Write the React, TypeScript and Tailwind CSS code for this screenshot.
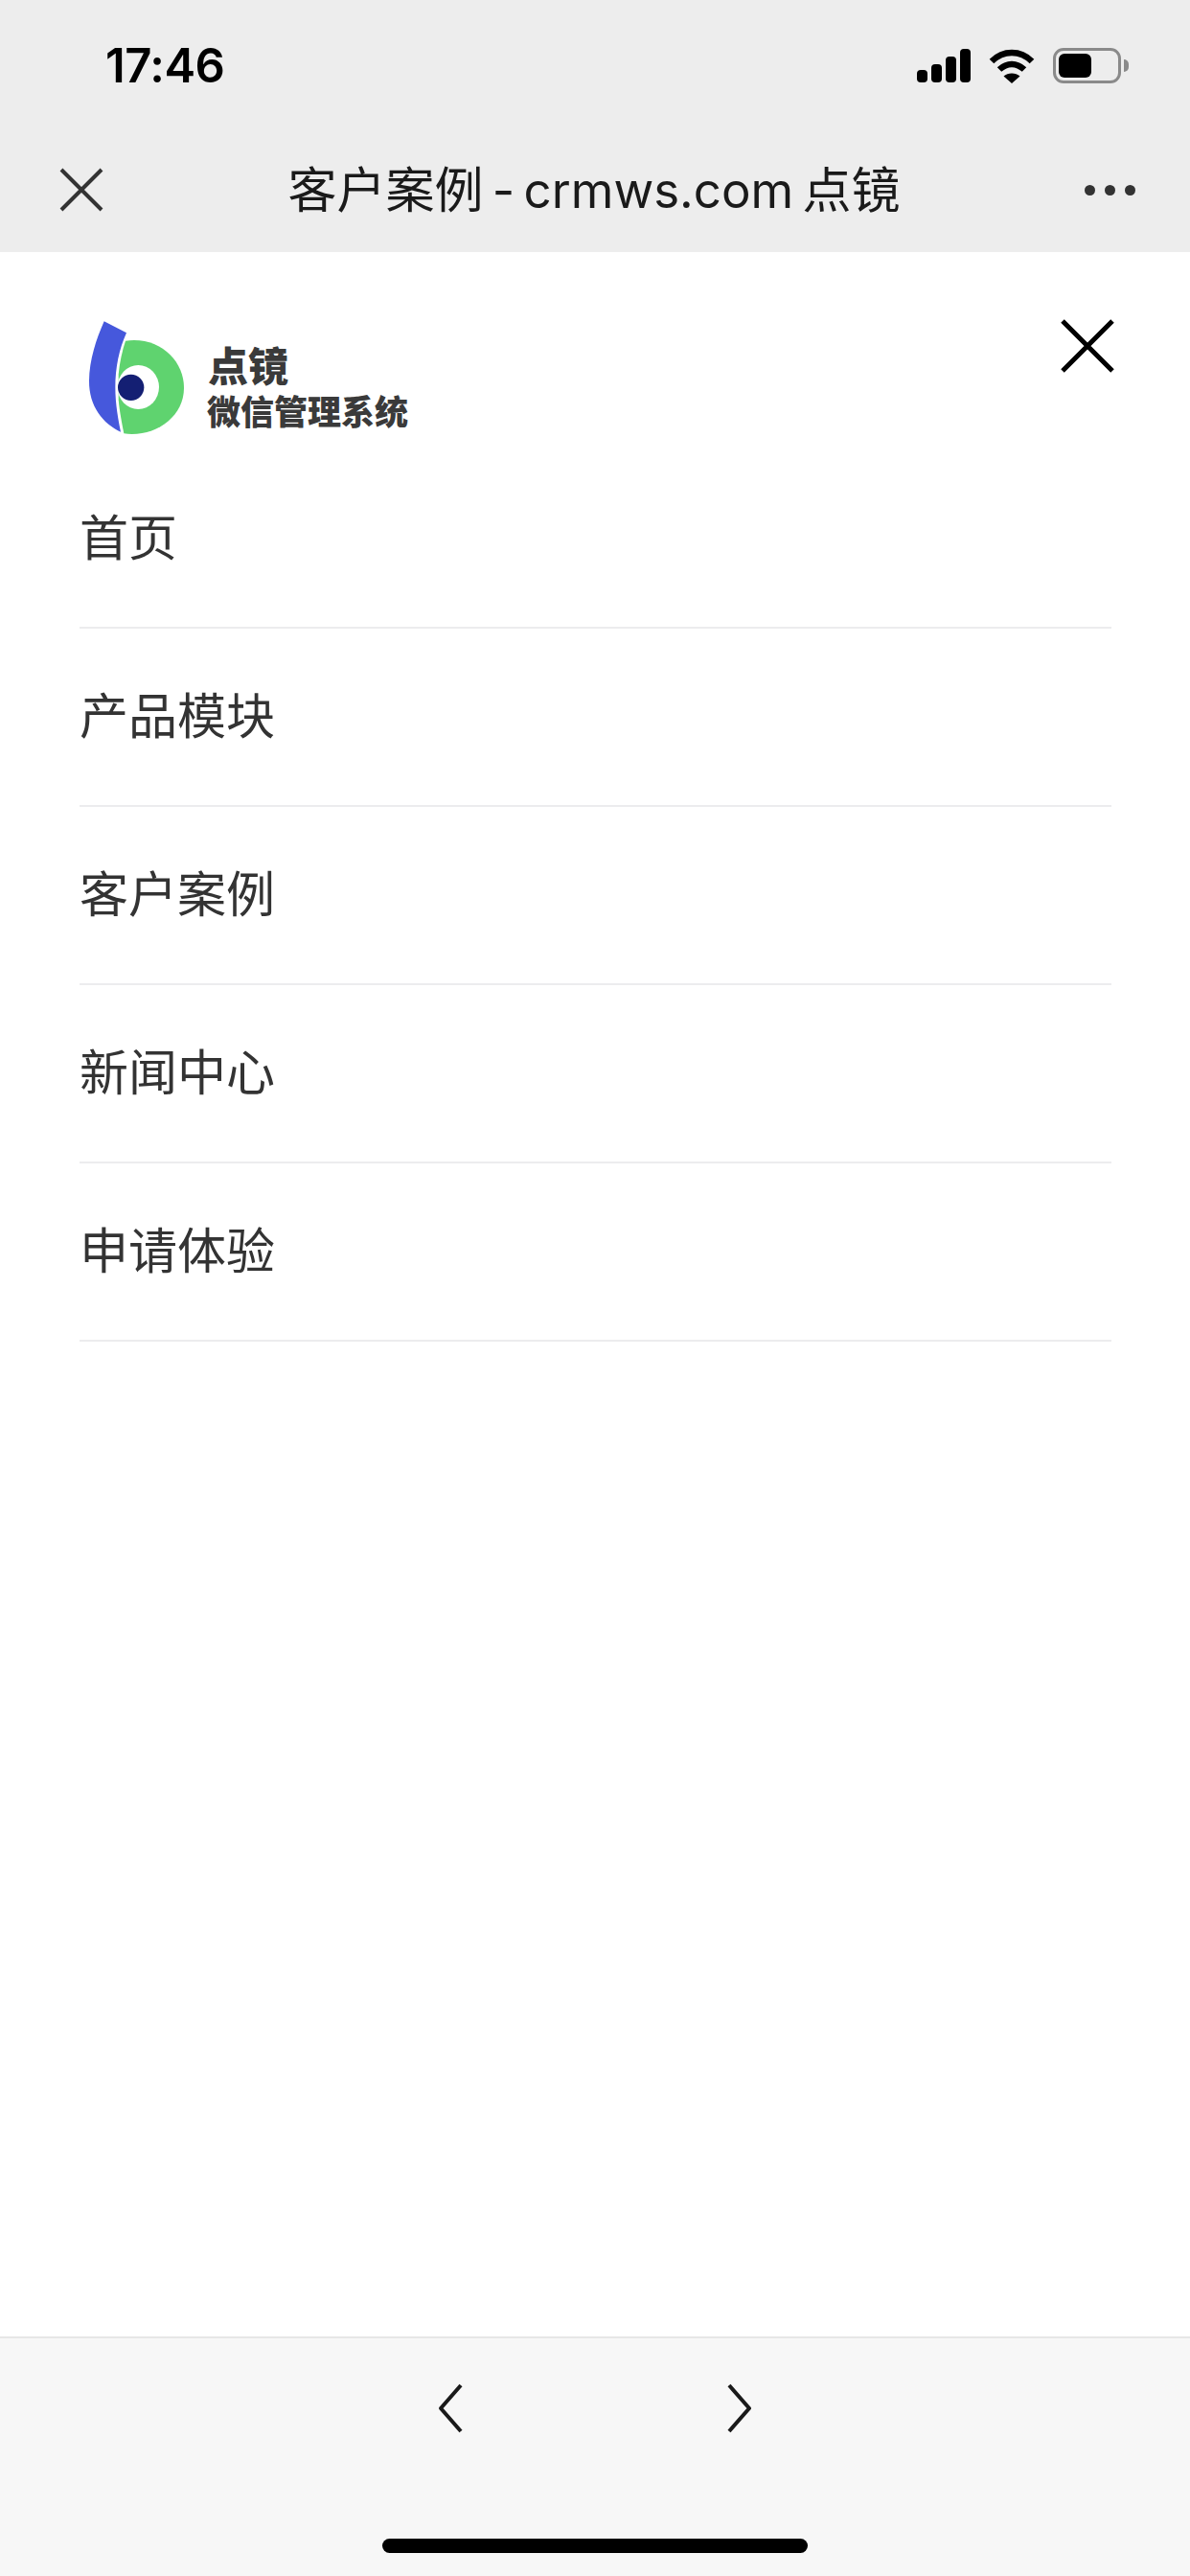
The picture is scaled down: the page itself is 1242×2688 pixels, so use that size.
import React from "react";

const sans = "font-['Inter','Noto_Sans_CJK_SC',sans-serif]";
const menuItems = ["首页", "产品模块", "客户案例", "新闻中心", "申请体验"];

const StatusIcons = () => (
  <div className="flex items-center">
    <svg width="58" height="37" viewBox="0 0 58 37" className="block" fill="#000">
      <rect x="1" y="23" width="11" height="13" rx="4" />
      <rect x="16" y="17" width="11" height="19" rx="4" />
      <rect x="31" y="9" width="11" height="27" rx="4" />
      <rect x="46" y="1" width="11" height="35" rx="4" />
    </svg>
    <svg width="48" height="38" viewBox="0 0 48 38" className="block ml-[18px]" fill="none" stroke="#000" strokeWidth="6.5">
      <path d="M3 14 C15 2 33 2 45 14" />
      <path d="M11 22.5 C19 15 29 15 37 22.5" />
      <path d="M24 37 L15.5 29.5 C20 25.5 28 25.5 32.500 29.500 Z" fill="#000" stroke="none" />
    </svg>
    <div className="flex items-center ml-[19px]">
      <div className="w-[71px] h-[37px] rounded-[11px] border-[3px] border-[#8a8a8a] p-[3px]">
        <div className="w-[34px] h-full rounded-[6px] bg-black" />
      </div>
      <div className="w-[5px] h-[13px] ml-[3px] rounded-r-full bg-[#8a8a8a]" />
    </div>
  </div>
);

const Logo = () => (
  <div className="flex items-start">
    <svg width="104" height="122" viewBox="0 0 312 366" className="block">
      <path d="M53 4 L123 40 C100 90 88 150 88 210 C88 265 98 315 105 350 C50 325 5 270 6 190 C7 125 28 60 53 4 Z" fill="#4658dc" />
      <path d="M120 65 C225 50 303 125 303 212 C303 305 210 368 115 355 C108 320 102 290 98 250 L98 170 C102 130 110 95 120 65 Z" fill="#5fd36f" />
      <ellipse cx="160" cy="210" rx="65" ry="69" fill="#fff" />
      <circle cx="137" cy="211" r="41" fill="#141f73" />
    </svg>
    <div className="ml-[20px] mt-[24px] flex flex-col text-[#3a3a3a] font-black font-['Inter','Noto_Sans_CJK_SC',sans-serif]">
      <div className="text-[42px] leading-[50px] pl-[2px]">点镜</div>
      <div className="text-[35px] leading-[45px] pl-[1px]">微信管理系统</div>
    </div>
  </div>
);

export default function App() {
  return (
    <div className={`w-[1242px] h-[2688px] flex flex-col bg-white ${sans}`}>
      <div className="h-[263px] shrink-0 bg-[#ededed] flex flex-col">
        <div className="h-[136px] flex items-center justify-between pl-[110px] pr-[64px] pt-[1px]">
          <div className="text-[49px] leading-none font-semibold text-black tracking-[-0.5px]">17:46</div>
          <StatusIcons />
        </div>
        <div className="flex-1 flex items-center justify-between pl-[62px] pr-[57px] pb-[3px]">
          <svg width="46" height="46" viewBox="0 0 46 46" fill="none" stroke="#333" strokeWidth="4" className="block">
            <path d="M2 2 L44 44 M44 2 L2 44" />
          </svg>
          <div className="text-[51px] leading-none text-[#1a1a1a] [word-spacing:-5px]">客户案例 - crmws.com 点镜</div>
          <div className="flex gap-[10px]">
            <div className="w-[11px] h-[11px] rounded-full bg-[#333]" />
            <div className="w-[11px] h-[11px] rounded-full bg-[#333]" />
            <div className="w-[11px] h-[11px] rounded-full bg-[#333]" />
          </div>
        </div>
      </div>

      <div className="flex-1 pl-[83px] pr-[82px]">
        <div className="h-[207px] flex items-start justify-between pt-[71px] pl-[8px]">
          <Logo />
          <svg width="56" height="56" viewBox="0 0 56 56" fill="none" stroke="#000" strokeWidth="5" className="block mr-[-3px] mt-[-1px]">
            <path d="M2 2 L54 54 M54 2 L2 54" />
          </svg>
        </div>
        {menuItems.map((item) => (
          <div key={item} className="h-[186px] flex items-center border-b-2 border-[#ececee] text-[51px] text-[#333]">
            {item}
          </div>
        ))}
      </div>

      <div className="h-[250px] shrink-0 bg-[#f7f7f7] border-t-2 border-[#e6e6e6] flex flex-col items-center">
        <div className="flex gap-[276px] mt-[47px]">
          <svg width="26" height="52" viewBox="0 0 26 52" fill="none" stroke="#1a1a1a" strokeWidth="4" strokeLinejoin="round" className="block">
            <path d="M24 2 L3 26 L24 50" />
          </svg>
          <svg width="26" height="52" viewBox="0 0 26 52" fill="none" stroke="#1a1a1a" strokeWidth="4" strokeLinejoin="round" className="block">
            <path d="M2 2 L23 26 L2 50" />
          </svg>
        </div>
        <div className="w-[444px] h-[15px] rounded-full bg-black mt-[110px]" />
      </div>
    </div>
  );
}
